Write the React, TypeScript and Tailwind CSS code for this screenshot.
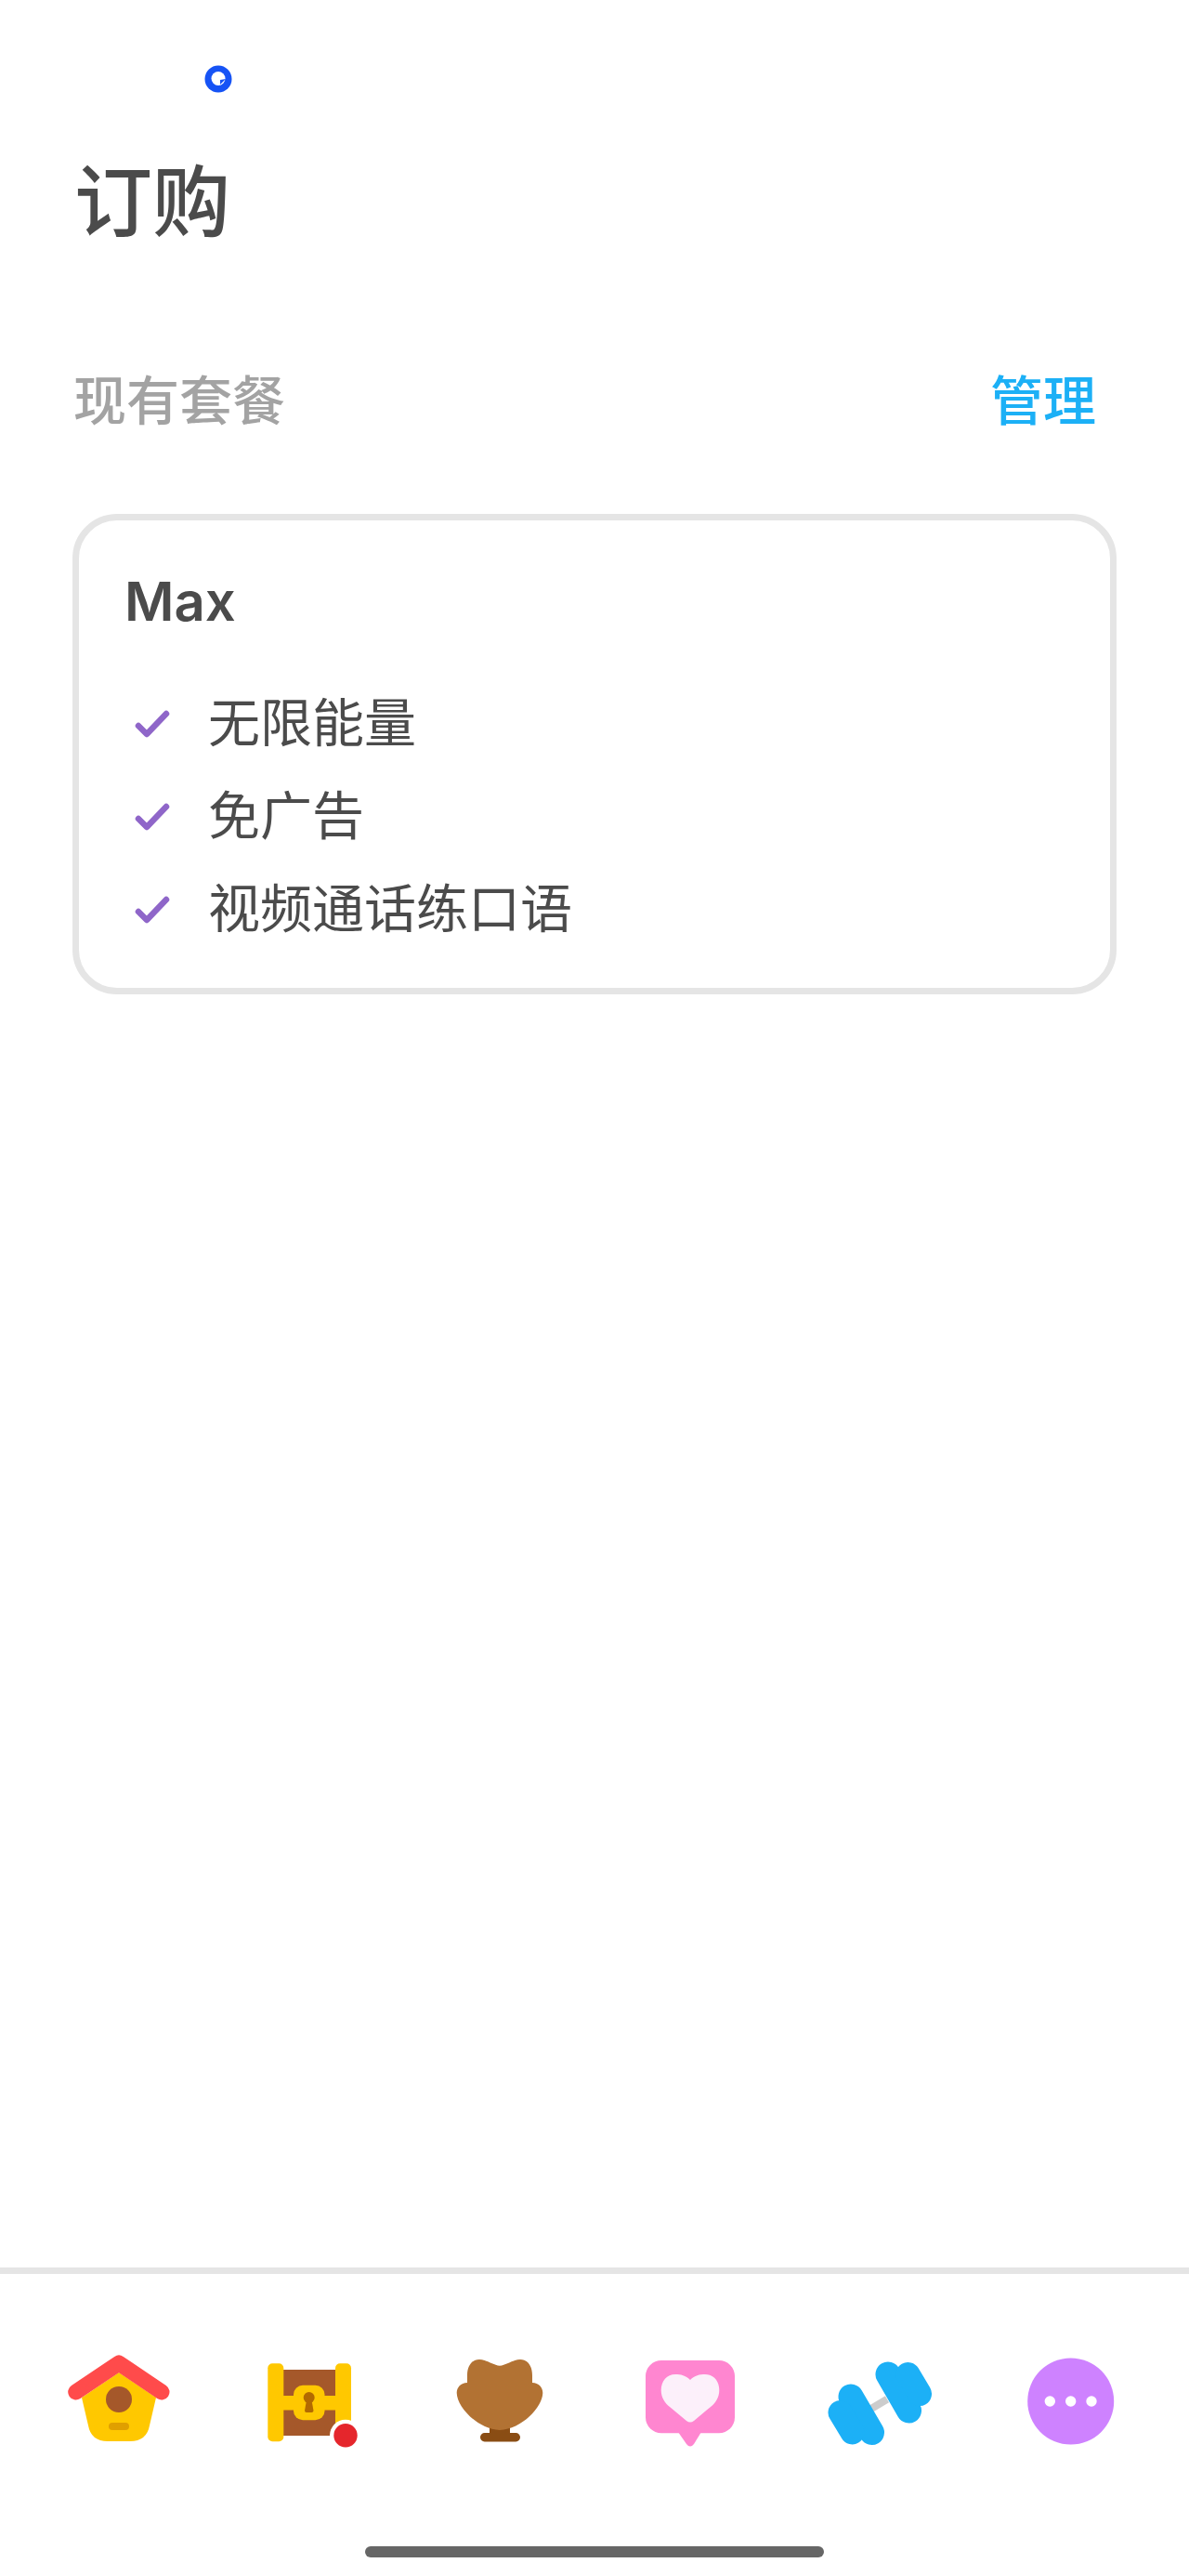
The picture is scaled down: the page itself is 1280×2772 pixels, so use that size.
const cjk = "font-['Noto_Sans_CJK_SC','Noto_Sans',sans-serif]";

const HomeIcon = () => (
  <svg viewBox="0 0 120 120" className="w-[120px] h-[120px]">
    <path d="M60 33 L100 60 L93 90 Q90 107 72 107 H48 Q30 107 27 90 L20 60Z" fill="#ffc800" />
    <path d="M13.7 54 L60 23 L106 54" fill="none" stroke="#ff4b4b" strokeWidth="17" strokeLinecap="round" strokeLinejoin="round" />
    <circle cx="60" cy="62" r="14" fill="#a5582a" />
    <rect x="49" y="87" width="22" height="8" rx="4" fill="#e09f00" />
  </svg>
);

const ChestIcon = () => (
  <svg viewBox="0 0 120 120" className="w-[120px] h-[120px]">
    <rect x="30" y="30" width="60" height="71" fill="#a5582a" />
    <rect x="30" y="58" width="60" height="15.5" fill="#ffc800" />
    <rect x="15.3" y="23.3" width="17" height="84" rx="5" fill="#ffc800" />
    <rect x="88" y="23.3" width="17" height="84" rx="5" fill="#ffc800" />
    <rect x="43" y="46.7" width="33.5" height="37.5" rx="10" fill="#ffc800" />
    <circle cx="59.7" cy="60" r="6" fill="#b36a00" />
    <path d="M57.5 60 H62 L64.5 74 Q64.5 76 62.5 76 H57 Q55 76 55 74Z" fill="#b36a00" />
    <circle cx="99" cy="100.7" r="17" fill="#ffffff" />
    <circle cx="99" cy="100.7" r="12.7" fill="#e5262c" />
  </svg>
);

const TrophyIcon = () => (
  <svg viewBox="0 0 120 120" className="w-[120px] h-[120px]">
    <rect x="49" y="90" width="22" height="12" fill="#8a4d14" />
    <rect x="39" y="98" width="43" height="9.4" rx="4.7" fill="#8a4d14" />
    <path d="M60 25.7 C52 25 46 19 38 19 C30 19 25 26 25 36 L25 44 C18 44 13.7 49 13.7 55 C14 70 36 94 60 95 C84 94 106 70 106.3 55 C106.3 49 102 44 95 44 L95 36 C95 26 90 19 82 19 C74 19 68 25 60 25.7Z" fill="#b27233" />
  </svg>
);

const HeartIcon = () => (
  <svg viewBox="0 0 120 120" className="w-[120px] h-[120px]">
    <rect x="12" y="20" width="96" height="78.3" rx="17" fill="#ff86d0" />
    <path d="M47 97 H72 L64 110 Q60 115 56 110Z" fill="#ff86d0" />
    <path d="M60 41 C55 36 50 35 44 35 C35 35 28.7 42 28.7 52 C28.7 60 33 66 38 70 L56 85 Q60 88 64 85 L82 70 C87 66 91.3 60 91.3 52 C91.3 42 85 35 76 35 C70 35 65 36 60 41Z" fill="#fcf0fa" />
  </svg>
);

const DumbbellIcon = () => (
  <svg viewBox="0 0 120 120" className="w-[120px] h-[120px]" fill="none" strokeLinecap="round">
    <path d="M50.3 71.7 L67 61.7" stroke="#cccccc" strokeWidth="8" strokeLinecap="butt" />
    <g stroke="#1cb0f6">
      <path d="M28 59 L50.5 97.5" strokeWidth="27" />
      <path d="M16.5 76 L29.5 97.5" strokeWidth="26" />
      <path d="M68 35 L90.5 74" strokeWidth="27" />
      <path d="M89.5 35 L102 56" strokeWidth="26" />
    </g>
  </svg>
);

const MoreIcon = () => (
  <svg viewBox="0 0 120 120" className="w-[120px] h-[120px]">
    <circle cx="59.7" cy="64" r="46.5" fill="#ce82ff" />
    <circle cx="37.3" cy="64" r="5.7" fill="#ffffff" />
    <circle cx="59.7" cy="64" r="5.7" fill="#ffffff" />
    <circle cx="82" cy="64" r="5.7" fill="#ffffff" />
  </svg>
);

const Check = () => (
  <svg viewBox="0 0 40 36" className="w-[40px] h-[36px] shrink-0 mt-[12px]">
    <path d="M5 19 L14 28 L35 6" fill="none" stroke="#8f66c9" strokeWidth="6.5" strokeLinecap="round" strokeLinejoin="round" />
  </svg>
);

const features = ["无限能量", "免广告", "视频通话练口语"];
const tabs = [HomeIcon, ChestIcon, TrophyIcon, HeartIcon, DumbbellIcon, MoreIcon];

const App = () => {
  return (
    <div className={`flex flex-col h-[2772px] bg-white ${cjk}`}>
      <div className="pt-[70px] pl-[220px]">
        <svg viewBox="0 0 30 30" className="w-[30px] h-[30px]">
          <circle cx="15" cy="15" r="14.5" fill="#1653f5" />
          <circle cx="15" cy="14.5" r="7.5" fill="#ffffff" />
          <path d="M17 21 L23 15 L17 16Z" fill="#1653f5" />
        </svg>
      </div>

      <div className="mt-[62px] pl-[80px] text-[84px] leading-[100px] font-medium text-[#4b4b4b]">订购</div>

      <div className="mt-[125px] pl-[79px] pr-[100px] flex items-center justify-between text-[57px] leading-[80px] font-medium">
        <span className="text-[#a3a3a3]">现有套餐</span>
        <span className="text-[#1cb0f6]">管理</span>
      </div>

      <div className="mt-[86px] mx-[78px] h-[517px] border-[7px] border-[#e5e5e5] rounded-[48px] pl-[49px] pt-[47px]">
        <div className="text-[58px] leading-[80px] font-['Inter',sans-serif] font-semibold text-[#4b4b4b]">Max</div>
        <div className="mt-[47px] flex flex-col gap-[20px]">
          {features.map((label) => (
            <div key={label} className="flex items-center h-[80px] pl-[10px] gap-[40px] text-[56px] text-[#4b4b4b]">
              <Check />
              <span>{label}</span>
            </div>
          ))}
        </div>
      </div>

      <div className="flex-1" />

      <div className="border-t-[7px] border-[#e5e5e5] px-[25px] pt-[73px] grid grid-cols-6 justify-items-center">
        {tabs.map((Icon, i) => (
          <Icon key={i} />
        ))}
      </div>

      <div className="flex justify-center pt-[100px] pb-[20px]">
        <div className="w-[494px] h-[12px] rounded-full bg-[#666666]" />
      </div>
    </div>
  );
};

export default App;
